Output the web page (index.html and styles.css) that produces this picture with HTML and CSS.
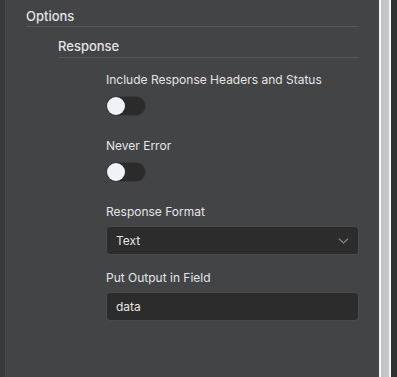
FILE: index.html
```html
<!DOCTYPE html>
<html lang="en">
<head>
    <meta charset="UTF-8">
    <meta name="viewport" content="width=device-width, initial-scale=1.0">
    <title>Options</title>
    <link rel="stylesheet" href="styles.css">
</head>
<body>
    <div class="edge"></div>
    <div class="panel">
        <p class="head1">Options</p>
        <div class="group">
            <p class="head2">Response</p>
            <div class="fields">
                <div class="field tog">
                    <p class="lbl">Include Response Headers and Status</p>
                    <span class="switch"><span class="knob"></span></span>
                </div>
                <div class="field tog">
                    <p class="lbl">Never Error</p>
                    <span class="switch"><span class="knob"></span></span>
                </div>
                <div class="field">
                    <p class="lbl">Response Format</p>
                    <div class="box select">
                        <span>Text</span>
                        <svg width="11" height="6" viewBox="0 0 11 6"><path d="M1 0.8 L5.5 5 L10 0.8" fill="none" stroke="#858587" stroke-width="1.2"/></svg>
                    </div>
                </div>
                <div class="field">
                    <p class="lbl">Put Output in Field</p>
                    <div class="box"><span>data</span></div>
                </div>
            </div>
        </div>
    </div>
    <div class="bar">
        <div class="thumb"></div>
    </div>
</body>
</html>
```
FILE: styles.css
```css
body{
    margin: 0;
    height: 377px;
    display: flex;
    background-color: #2f3032;
    color: #e4e4e6;
    font-family: Inter, "Noto Sans", sans-serif;
    overflow: hidden;
}
p{
    margin: 0;
}
.edge{
    width: 5px;
    background-color: #38393b;
    border-right: 1px solid #4a4b4d;
}
.panel{
    flex: 1;
    background-color: #434446;
    padding: 8px 20px 0 20px;
}
.head1{
    font-size: 13px;
    font-weight: 500;
    line-height: 16px;
    padding-bottom: 2px;
    border-bottom: 1px solid #55565a;
}
.group{
    margin-left: 32px;
    margin-top: 11px;
}
.head2{
    font-size: 13px;
    font-weight: 500;
    line-height: 16px;
    padding-bottom: 3px;
    border-bottom: 1px solid #55565a;
}
.fields{
    margin-left: 48px;
    padding-top: 14px;
}
.lbl{
    font-size: 12px;
    line-height: 16px;
    margin-bottom: 6px;
}
.field{
    margin-bottom: 15px;
}
.tog{
    margin-bottom: 22px;
}
.tog .lbl{
    margin-bottom: 8px;
}
.switch{
    display: block;
    width: 40px;
    height: 20px;
    box-sizing: border-box;
    border-radius: 10px;
    background-color: #2b2b2c;
    border: 1px solid #3a3a3c;
    position: relative;
}
.knob{
    position: absolute;
    left: 0;
    top: 0;
    width: 18px;
    height: 18px;
    border-radius: 50%;
    background-color: #f1f2f8;
}
.box{
    height: 29px;
    box-sizing: border-box;
    background-color: #2c2c2d;
    border: 1px solid #4a4a4c;
    border-radius: 4px;
    display: flex;
    align-items: center;
    justify-content: space-between;
    padding: 0 9px;
    font-size: 12px;
}
.bar{
    width: 18px;
    background-color: #2f3032;
    display: flex;
}
.thumb{
    width: 8px;
    background-color: #c5c5c5;
    border-left: 2px solid #f4f4f4;
    border-right: 2px solid #f4f4f4;
}
```
